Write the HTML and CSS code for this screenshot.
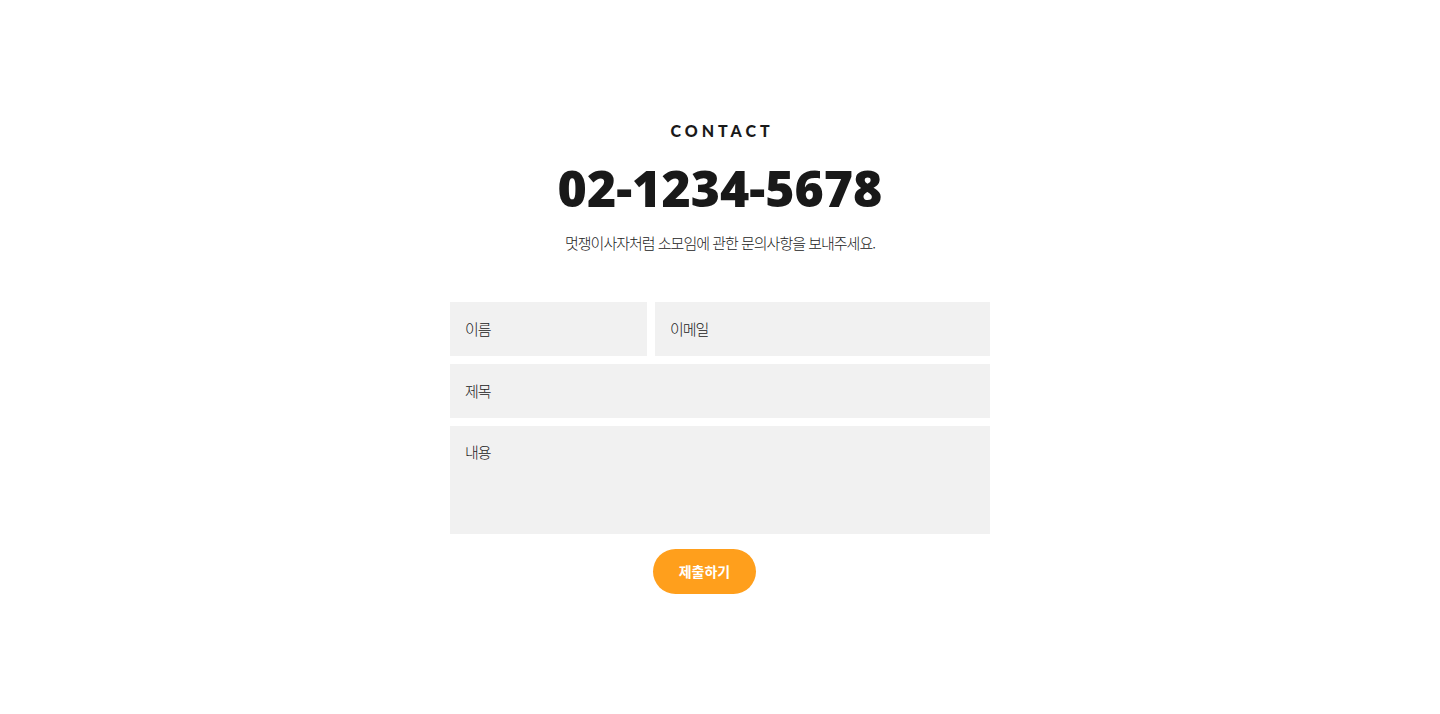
FILE: index.html
```html
<!DOCTYPE html>
<html lang="ko">
<head>
<meta charset="utf-8">
<meta name="viewport" content="width=device-width, initial-scale=1">
<title>Contact</title>
<link rel="stylesheet" href="styles.css">
</head>
<body>
<main class="contact">
  <h2 class="contact-label">CONTACT</h2>
  <p class="contact-phone">02-1234-5678</p>
  <p class="contact-text">멋쟁이사자처럼 소모임에 관한 문의사항을 보내주세요.</p>
  <form class="form">
    <div class="form-row">
      <input class="field" type="text" name="name" placeholder="이름" aria-label="이름">
      <input class="field" type="email" name="email" placeholder="이메일" aria-label="이메일">
    </div>
    <input class="field" type="text" name="subject" placeholder="제목" aria-label="제목">
    <textarea class="field field-message" name="message" placeholder="내용" aria-label="내용"></textarea>
    <button class="submit" type="submit">제출하기</button>
  </form>
</main>
</body>
</html>
```
FILE: styles.css
```css
* {
  box-sizing: border-box;
}

body {
  margin: 0;
  background: #fff;
  color: #191919;
  font-family: "Noto Sans CJK KR", sans-serif;
}

.contact {
  max-width: 540px;
  margin: 0 auto;
  padding: 119px 0;
  text-align: center;
}

.contact-label {
  margin: 0;
  padding-left: 4px;
  font-family: Lato, sans-serif;
  font-size: 16px;
  font-weight: 900;
  line-height: 24px;
  letter-spacing: 4px;
}

.contact-phone {
  margin: 13px 0 11px;
  font-family: "Open Sans", sans-serif;
  font-size: 50px;
  font-weight: 800;
  line-height: 64px;
}

.contact-text {
  margin: 0 0 47px;
  color: #222;
  font-size: 15px;
  font-weight: 300;
  line-height: 24px;
  letter-spacing: -1px;
}

.form {
  display: flex;
  flex-direction: column;
  gap: 8px;
}

.form-row {
  display: grid;
  grid-template-columns: 197fr 335fr;
  gap: 8px;
}

.field {
  display: block;
  width: 100%;
  min-width: 0;
  height: 54px;
  padding: 14px 15px 16px;
  border: 0;
  border-radius: 0;
  background: #f1f1f1;
  color: #222;
  font: inherit;
  font-size: 15px;
  font-weight: 300;
  line-height: 24px;
  letter-spacing: -1px;
}

.field::placeholder {
  color: #222;
  opacity: 1;
}

.field-message {
  height: 108px;
  resize: none;
}

.submit {
  align-self: center;
  margin: 7px 31px 0 0;
  padding: 10px 26px;
  border: 0;
  border-radius: 23px;
  background: #ff9f1c;
  color: #fff;
  font: inherit;
  font-size: 14px;
  font-weight: 700;
  line-height: 25px;
}
```
